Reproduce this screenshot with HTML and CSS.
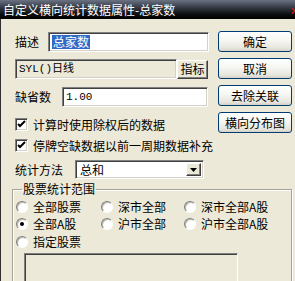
FILE: index.html
```html
<!DOCTYPE html>
<html lang="zh">
<head>
  <meta charset="UTF-8">
  <title>自定义横向统计数据属性</title>
  <link rel="stylesheet" href="styles.css">
</head>
<body>
  <div class="window">
    <div class="titlebar">
      <span class="title">自定义横向统计数据属性-总家数</span>
      <span class="close">✕</span>
    </div>
    <div class="content">
      <div class="top">
        <div class="fields">
          <div class="row row-desc">
            <label class="lbl lbl-desc">描述</label>
            <div class="edit edit-desc"><span class="sel">总家数</span></div>
          </div>
          <div class="row row-formula">
            <div class="edit edit-formula">SYL()日线</div>
            <button class="classic-btn">指标</button>
          </div>
          <div class="row row-default">
            <label class="lbl lbl-default">缺省数</label>
            <div class="edit edit-default">1.00</div>
          </div>
          <div class="check check-first">
            <span class="box">
              <svg width="9" height="9" viewBox="0 0 9 9"><path d="M1 4l2 2 5-5" fill="none" stroke="#000" stroke-width="2"/></svg>
            </span>
            <span>计算时使用除权后的数据</span>
          </div>
          <div class="check">
            <span class="box">
              <svg width="9" height="9" viewBox="0 0 9 9"><path d="M1 4l2 2 5-5" fill="none" stroke="#000" stroke-width="2"/></svg>
            </span>
            <span>停牌空缺数据以前一周期数据补充</span>
          </div>
          <div class="row row-method">
            <label class="lbl lbl-method">统计方法</label>
            <div class="combo">
              <span class="combo-text">总和</span>
              <span class="drop">
                <svg width="7" height="4" viewBox="0 0 7 4"><path d="M0 0h7L3.5 4z" fill="#000"/></svg>
              </span>
            </div>
          </div>
        </div>
        <div class="buttons">
          <button class="xp-btn">确定</button>
          <button class="xp-btn">取消</button>
          <button class="xp-btn">去除关联</button>
          <button class="xp-btn">横向分布图</button>
        </div>
      </div>

      <fieldset class="range">
        <legend>股票统计范围</legend>
        <div class="radios">
          <div class="radio"><span class="dot"></span>全部股票</div>
          <div class="radio"><span class="dot"></span>深市全部</div>
          <div class="radio"><span class="dot"></span>深市全部A股</div>
          <div class="radio"><span class="dot on"></span>全部A股</div>
          <div class="radio"><span class="dot"></span>沪市全部</div>
          <div class="radio"><span class="dot"></span>沪市全部A股</div>
          <div class="radio"><span class="dot"></span>指定股票</div>
        </div>
        <div class="stock-list"></div>
      </fieldset>
    </div>
  </div>
</body>
</html>
```

FILE: styles.css
```css
* {
  margin: 0;
  padding: 0;
  box-sizing: border-box;
}

body {
  font-family: "Noto Sans CJK SC", "DejaVu Sans", sans-serif;
  font-size: 12px;
  color: #000;
  background: #ECE9D8;
}

.window {
  width: 295px;
  height: 281px;
  overflow: hidden;
  background: #ECE9D8;
}

/* Barre de titre */
.titlebar {
  height: 19px;
  display: flex;
  align-items: center;
  justify-content: space-between;
  padding-left: 3px;
  background: linear-gradient(#6b7282 0%, #3a3f4a 35%, #0c0d10 75%, #000 100%);
  color: #fff;
  overflow: hidden;
}

.title {
  line-height: 15px;
  font-size: 12px;
}

.close {
  color: #e01010;
  font-weight: bold;
  font-size: 11px;
  margin-right: -4px;
}

.content {
  height: 262px;
  padding: 12px 0 0 14px;
  border-left: 1px solid #303030;
}

.top {
  display: flex;
  gap: 9px;
}

.fields {
  width: 194px;
}

.row {
  display: flex;
  align-items: center;
}

.lbl {
  line-height: 14px;
}

.row-desc {
  margin-top: 1px;
  height: 20px;
}

.lbl-desc {
  width: 33px;
}

.row-formula {
  margin-top: 7px;
  height: 20px;
}

.row-default {
  margin-top: 8px;
  height: 20px;
}

.lbl-default {
  width: 47px;
}

/* Champs enfoncés */
.edit {
  height: 20px;
  background: #fff;
  border: 1px solid;
  border-color: #808080 #fff #fff #808080;
  box-shadow: inset 1px 1px #404040, inset -1px -1px #d4d0c8;
  padding: 2px 3px;
  line-height: 14px;
  white-space: nowrap;
}

.edit-desc {
  width: 161px;
}

.sel {
  background: #316AC5;
  color: #fff;
  display: inline-block;
  line-height: 14px;
  padding: 0 1px;
}

.edit-formula,
.edit-default {
  font-family: "Liberation Mono", "Noto Sans CJK SC", monospace;
  font-size: 11px;
}

.edit-formula {
  width: 162px;
  background: #ECE9D8;
}

.edit-formula::first-line {
  font-size: 11px;
}

.edit-default {
  width: 146px;
}

.classic-btn {
  width: 31px;
  height: 19px;
  font-family: inherit;
  font-size: 12px;
  line-height: 14px;
  background: #ECE9D8;
  border: 1px solid;
  border-color: #fff #404040 #404040 #fff;
  box-shadow: inset -1px -1px #808080;
}

/* Cases à cocher */
.check {
  display: flex;
  align-items: center;
  height: 13px;
  margin-top: 8px;
  line-height: 14px;
  white-space: nowrap;
}

.check-first {
  margin-top: 11px;
}

.box {
  flex: none;
  width: 13px;
  height: 13px;
  margin-right: 5px;
  background: #fff;
  border: 1px solid;
  border-color: #808080 #fff #fff #808080;
  box-shadow: inset 1px 1px #404040, inset -1px -1px #d4d0c8;
  display: flex;
  align-items: center;
  justify-content: center;
}

.row-method {
  margin-top: 8px;
  height: 19px;
}

.lbl-method {
  width: 60px;
}

.combo {
  width: 129px;
  height: 19px;
  background: #fff;
  border: 1px solid;
  border-color: #808080 #fff #fff #808080;
  box-shadow: inset 1px 1px #404040, inset -1px -1px #d4d0c8;
  display: flex;
  align-items: center;
  justify-content: space-between;
  padding: 2px;
}

.combo-text {
  padding-left: 2px;
  line-height: 14px;
}

.drop {
  width: 15px;
  height: 13px;
  background: #ECE9D8;
  border: 1px solid;
  border-color: #fff #404040 #404040 #fff;
  box-shadow: inset -1px -1px #808080;
  display: flex;
  align-items: center;
  justify-content: center;
}

/* Boutons à droite */
.buttons {
  width: 74px;
  display: flex;
  flex-direction: column;
  gap: 6px;
}

.xp-btn {
  height: 21px;
  font-family: inherit;
  font-size: 12px;
  line-height: 14px;
  border: 1px solid #003C74;
  border-radius: 3px;
  background: linear-gradient(#fff 0%, #f6f6f2 45%, #e6e5dd 85%, #d6d0c5 100%);
  color: #000;
}

/* Groupe de sélection */
.range {
  margin: 3px 0 0 -3px;
  width: 280px;
  height: 100px;
  border: 1px solid #a5a397;
  box-shadow: 1px 1px #fff, inset 1px 1px #fff;
  padding: 2px 0 0 3px;
}

.range legend {
  margin-left: 6px;
  padding: 0 1px;
  line-height: 14px;
}

.radios {
  display: grid;
  grid-template-columns: 85px 83px 100px;
  grid-auto-rows: 17.5px;
}

.radio {
  display: flex;
  align-items: center;
  line-height: 14px;
  white-space: nowrap;
}

.dot {
  flex: none;
  width: 12px;
  height: 12px;
  margin-right: 5px;
  border-radius: 50%;
  background: radial-gradient(circle at 60% 60%, #fff 45%, #e6e4dc 100%);
  border: 1px solid;
  border-color: #808080 #fff #fff #808080;
  box-shadow: inset 1px 1px #bdbab0;
  display: flex;
  align-items: center;
  justify-content: center;
}

.dot.on::after {
  content: "";
  width: 4px;
  height: 4px;
  border-radius: 50%;
  background: #000;
}

.stock-list {
  margin: 2px 0 0 8px;
  width: 214px;
  height: 40px;
  background: #ECE9D8;
  border: 1px solid;
  border-color: #808080 #fff #fff #808080;
  box-shadow: inset 1px 1px #404040;
}
```
